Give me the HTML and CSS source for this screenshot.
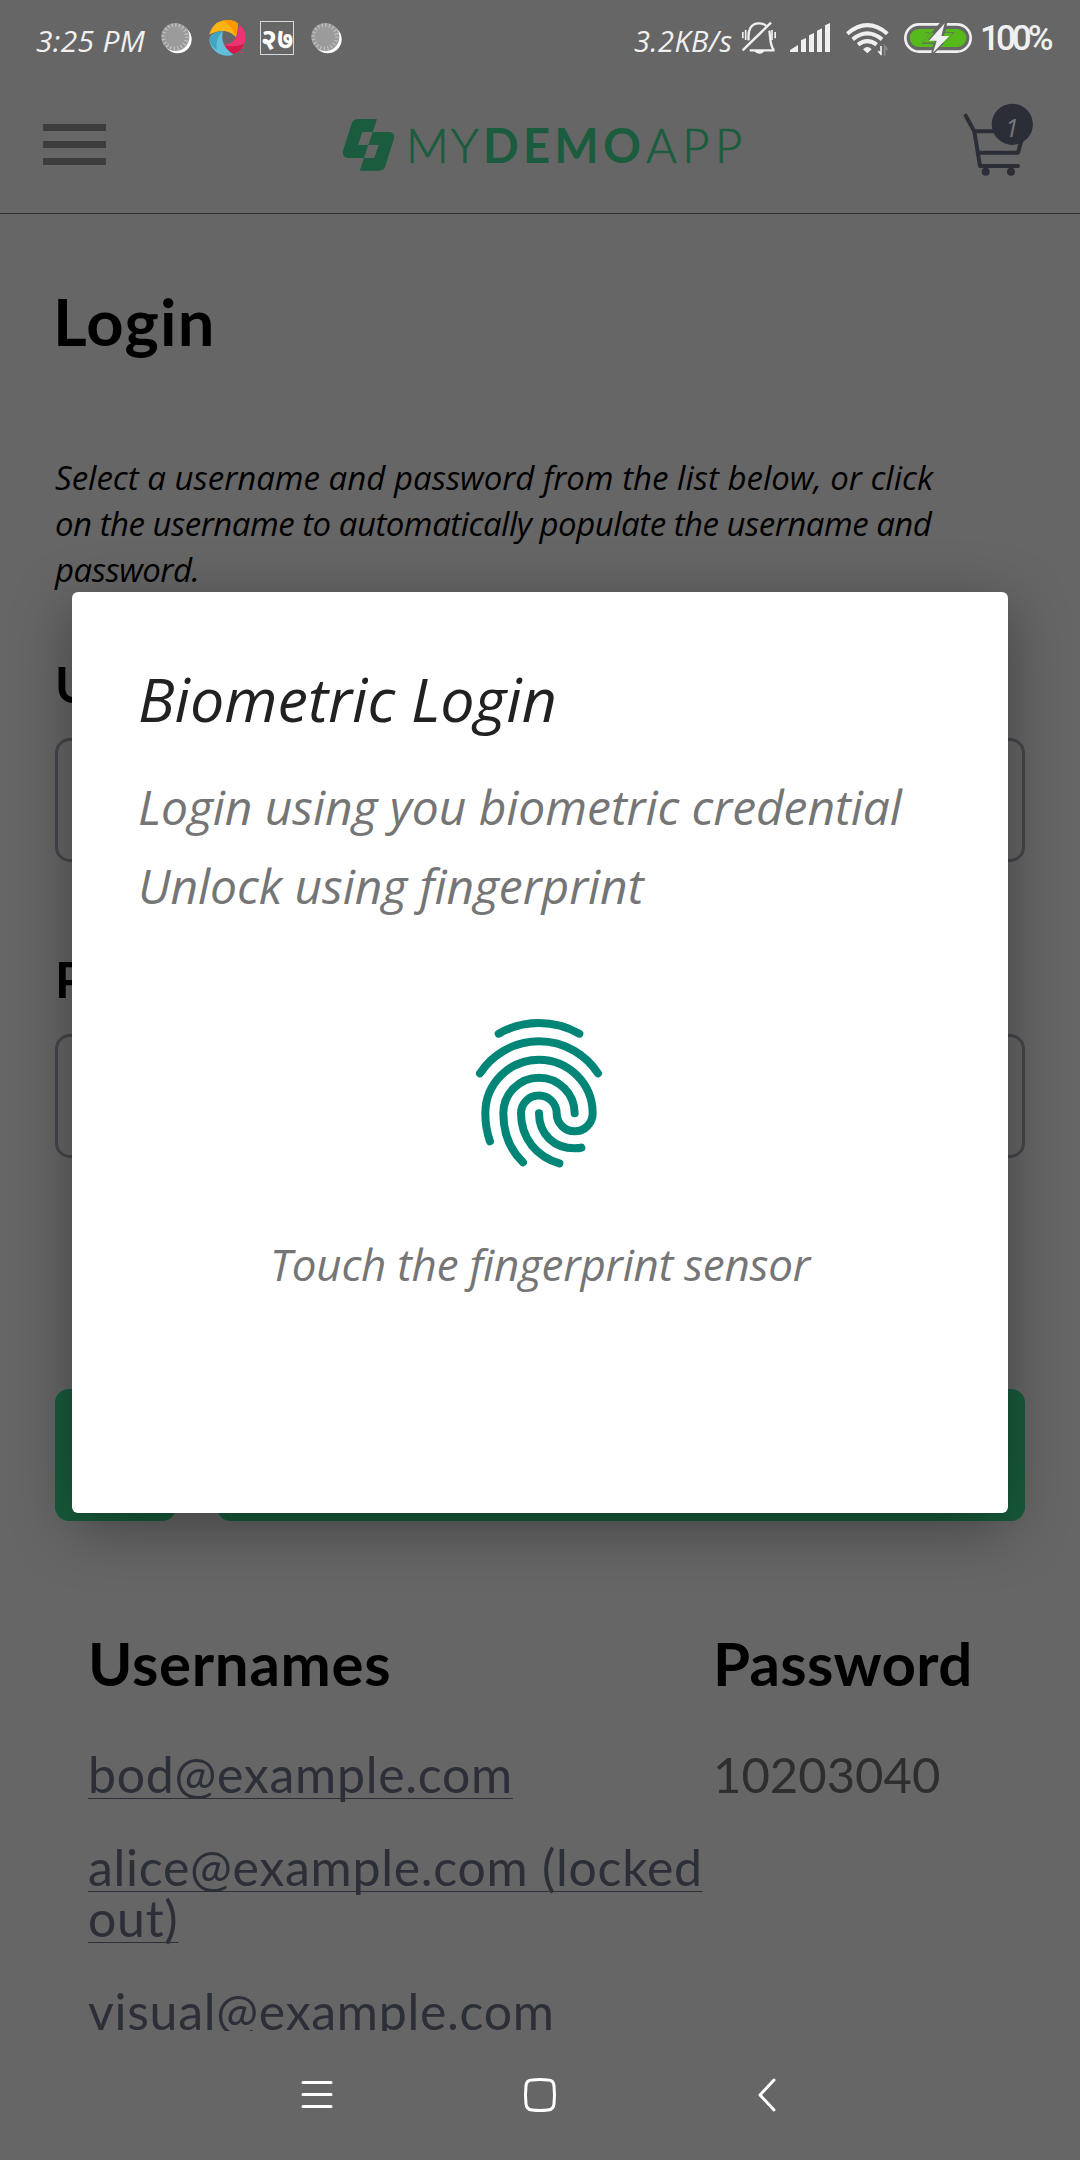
FILE: index.html
```
<!DOCTYPE html>
<html lang="en">
<head>
<meta charset="utf-8">
<title>My Demo App - Login</title>
<link rel="stylesheet" href="styles.css">
</head>
<body>
<div class="screen">
  <div class="status">
    <span class="clock">3:25 PM</span>
    <svg class="ic-dial" width="32" height="36" viewBox="484 60 96 108">
      <circle cx="534" cy="118" r="42" fill="#fff"/>
      <circle cx="527" cy="111" r="42" fill="#9b9b9b"/>
      <circle cx="526" cy="110" r="35" fill="none" stroke="#c9c9c9" stroke-width="11" stroke-dasharray="3 8"/>
    </svg>
    <svg class="ic-swirl" width="37" height="36" viewBox="626 60 111 108">
      <path d="M627 104C634 74 656 60 681 60C694 60 705 64 712 70C713 88 710 101 706 112C692 90 658 86 627 104Z" fill="#fdb515"/>
      <path d="M668 62C690 57 706 63 711 70C713 88 710 101 706 112C702 94 690 76 668 62Z" fill="#ff9800"/>
      <path d="M716 73C733 86 740 108 733 128C725 151 710 161 699 160C686 156 676 144 671 134C698 135 715 111 716 73Z" fill="#ef3370"/>
      <path d="M671 134C687 141 712 140 731 131C724 150 710 160 699 160C686 156 676 144 671 134Z" fill="#d3184b"/>
      <path d="M668 94C661 122 671 145 699 164C670 175 636 158 628 126C625 113 635 99 668 94Z" fill="#62bfdc"/>
      <path d="M668 94C653 108 648 120 649 149C632 138 626 123 628 111C638 99 652 94 668 94Z" fill="#42a5bf"/>
      <path d="M720 157h9" stroke="#ef3370" stroke-width="3"/>
    </svg>
    <span class="ic-date"><span>२७</span></span>
    <svg class="ic-dial2" width="32" height="36" viewBox="484 60 96 108">
      <circle cx="534" cy="118" r="42" fill="#fff"/>
      <circle cx="527" cy="111" r="42" fill="#9b9b9b"/>
      <circle cx="526" cy="110" r="35" fill="none" stroke="#c9c9c9" stroke-width="11" stroke-dasharray="3 8"/>
    </svg>
    <span class="speed">3.2KB/s</span>
    <svg class="ic-bell" width="34" height="36" viewBox="426 60 102 108" fill="none" stroke="#f0f0f0" stroke-width="7">
      <path d="M428 151L513 68"/>
      <path d="M446 121C443 90 452 70 477 70C487 70 494 73 499 78"/>
      <path d="M508 92C512 118 510 135 520 148V151H449"/>
      <path d="M462 153Q478 170 494 153Z" fill="#f0f0f0" stroke="none"/>
      <path d="M437 90V120M516 90V120" stroke-width="5"/>
      <path d="M428.500 96V115M525.500 96V115" stroke-width="5"/>
    </svg>
    <svg class="ic-signal" width="40" height="36" viewBox="570 60 120 108" fill="#f0f0f0">
      <path d="M570 156V150L594 135V156ZM603 156V121L618 114V156ZM627 156V106L642 99V156ZM651 156V92L666 85V156ZM675 156V76L690 69V156Z"/>
    </svg>
    <svg class="ic-wifi" width="43" height="36" viewBox="737 60 129 108" fill="none" stroke="#f0f0f0" stroke-width="12">
      <path d="M741 101Q801 50 861 101M757 118Q801 82 845 118M773 134Q801 113 829 134"/>
      <path d="M801 160L788 148Q801 134 814 148Z" fill="#f0f0f0" stroke="none"/>
      <path d="M842 138V166M834 153L842 163" stroke-width="5"/>
      <path d="M853 167V138L862 150" stroke="#8b8b8b" stroke-width="5"/>
    </svg>
    <svg class="ic-battery" width="68" height="36" viewBox="912 60 204 108">
      <rect x="916" y="73" width="196" height="82" rx="41" fill="none" stroke="#f0f0f0" stroke-width="8"/>
      <rect x="929" y="87" width="170" height="54" rx="27" fill="#56b91c"/>
      <path d="M1032 66L1042 66L1036 97H1064L1004 160H994L1000 131H966L1022 66Z" fill="#666"/>
      <path d="M1003 98H975Q984 98 990 99L967 128L1003 128L1006 120L985 119Z" fill="#56b91c" stroke="#666" stroke-width="1"/>
      <path d="M1034 99H1060L1034 128H1026Z" fill="#56b91c"/>
      <path d="M1034 70L987 122H1010L999 158L1048 108H1024Z" fill="#f0f0f0"/>
    </svg>
    <span class="percent">100%</span>
  </div>

  <header class="header">
    <svg class="burger" width="63" height="42" viewBox="0 0 63 42" fill="#3d3d3d">
      <rect y="0" width="63" height="7"/><rect y="17" width="63" height="7"/><rect y="34" width="63" height="7"/>
    </svg>
    <div class="brand">
      <svg width="52" height="52" viewBox="0 0 52 52" fill="#1a5c3d">
        <path d="M15 0H34L29.7 13H19.3L15 26H25.3L21 39H6Q-1 39 0 32L8.5 5Q10 0 15 0Z"/>
        <path d="M29.7 13H45Q52.500 13 50.800 20L42.500 46.500Q41 51.700 36 51.700H16.700L21 39H31.300L35.700 26H25.300Z"/>
      </svg>
      <span class="brand-my">MY</span><span class="brand-demo">DEMO</span><span class="brand-app">APP</span>
    </div>
    <svg class="cart" width="72" height="85" viewBox="0 0 72 85">
      <g fill="none" stroke="#2b2e37" stroke-width="4" stroke-linecap="round" stroke-linejoin="round">
        <path d="M3.700 13.700L12.300 29.300L18 64H56"/>
        <path d="M12.300 29.300H62L56 50.700H16"/>
      </g>
      <circle cx="23.700" cy="69.700" r="4" fill="#2b2e37"/><circle cx="49" cy="69.700" r="4" fill="#2b2e37"/>
      <circle cx="50.300" cy="22.300" r="20.600" fill="#2b2e37"/>
      <text x="50" y="34.500" text-anchor="middle" class="cart-count">1</text>
    </svg>
  </header>

  <main class="page">
    <h1>Login</h1>
    <p class="intro">Select a username and password from the list below, or click<br><span class="intro-tight">on the username to automatically populate the username and<br>password.</span></p>
    <div class="label">Username</div>
    <div class="field"></div>
    <div class="label label-second">Password</div>
    <div class="field"></div>
    <div class="buttons"><div class="btn-finger"></div><div class="btn-login"></div></div>
    <div class="accounts">
      <section>
        <h2>Usernames</h2>
        <a>bod@example.com</a>
        <a>alice@example.com (locked<br>out)</a>
        <a>visual@example.com</a>
      </section>
      <section>
        <h2 class="pw-title">Password</h2>
        <span class="pw">10203040</span>
      </section>
    </div>
  </main>

  <nav class="nav">
    <svg width="32" height="36" viewBox="0 0 32 36" stroke="#fff" stroke-width="3" stroke-linecap="round"><path d="M2 5.500H30M2 17.500H30M2 29.500H30"/></svg>
    <svg width="34" height="36" viewBox="0 0 34 36" fill="none" stroke="#fff" stroke-width="3"><path d="M9 3Q17 2 25 3Q30.500 3 31 9Q32 18 31 27Q30.500 32.500 25 33Q17 34 9 33Q3.500 32.500 3 27Q2 18 3 9Q3.500 3 9 3Z"/></svg>
    <svg width="22" height="36" viewBox="0 0 22 36" fill="none" stroke="#fff" stroke-width="3" stroke-linecap="round" stroke-linejoin="round"><path d="M18 3L4 18L18 33"/></svg>
  </nav>

  <div class="dialog">
    <div class="dialog-title">Biometric Login</div>
    <div class="dialog-text">Login using you biometric credential</div>
    <div class="dialog-text">Unlock using fingerprint</div>
    <svg class="finger" width="128" height="150" viewBox="105 114 384 450" fill="none" stroke="#008577" stroke-width="24" stroke-linecap="round">
      <path d="M176 161A244 244 0 0 1 418 161"/>
      <path d="M120 280A211 211 0 0 1 474 280"/>
      <path d="M150 484Q136 445 136 400A161 161 0 0 1 458 400A54 54 0 0 1 350 400A53.500 53.500 0 0 0 243 400C243 475 290 530 358 550"/>
      <path d="M249 547C210 510 190 460 190 400A107 107 0 0 1 404 400"/>
      <path d="M297 400C297 465 345 505 404 505Q418 505 424 503"/>
    </svg>
    <div class="dialog-hint">Touch the fingerprint sensor</div>
  </div>
</div>
</body>
</html>
```
FILE: styles.css
```
* { box-sizing: border-box; }
body { margin: 0; background: #666; }
.screen { position: relative; width: 1080px; height: 2160px; display: flex; flex-direction: column; overflow: hidden; background: #666; font-family: "Lato", sans-serif; }
svg { display: block; flex: none; }

.status { display: flex; align-items: flex-start; height: 76px; padding: 20px 0 0 36px; color: #f0f0f0; white-space: nowrap; }
.clock, .speed { font: italic 400 30px/42px "Open Sans", sans-serif; }
.clock { width: 125px; letter-spacing: .3px; }
.ic-swirl { margin-left: 16px; }
.ic-date { display: flex; justify-content: center; width: 34px; height: 34px; margin: 1px 0 0 14px; border: 1px solid #d8d8d8; font: 700 29px/32px "Noto Sans", sans-serif; color: #fff; }
.ic-dial2 { margin-left: 17px; }
.speed { width: 108px; margin-left: 291px; font-size: 29px; line-height: 41px; letter-spacing: .4px; }
.ic-signal { margin-left: 14px; }
.ic-wifi { margin-left: 16px; }
.ic-battery { margin-left: 15px; }
.percent { margin-left: 8px; font: 500 35px/37px "Roboto", sans-serif; letter-spacing: -4px; }

.header { display: flex; align-items: center; height: 138px; padding: 0 46px 0 43px; border-bottom: 1px solid #2d2d2d; }
.brand { display: flex; align-items: center; margin-left: 237px; font-size: 47px; line-height: 56px; color: #1a5c3d; }
.brand-my { width: 77px; margin-left: 11px; font-weight: 300; letter-spacing: 2px; -webkit-text-stroke: .7px #1a5c3d; }
.brand-demo { width: 163px; font-weight: 700; letter-spacing: 4.300px; }
.brand-app { font-weight: 300; letter-spacing: 5.500px; -webkit-text-stroke: .7px #1a5c3d; }
.cart { margin-left: auto; }
.cart-count { font: italic 400 25px "Open Sans", sans-serif; fill: #777; }

.page { height: 1817px; padding: 68px 55px 0; overflow: hidden; }
h1, h2, p { margin: 0; }
h1 { margin-left: -2px; font-size: 65px; line-height: 78px; letter-spacing: 1.200px; color: #000; }
.intro { margin-top: 95px; font: italic 400 33px/46px "Open Sans", sans-serif; color: #000; white-space: nowrap; }
.intro-tight { letter-spacing: -.500px; }
.label { margin-top: 61px; font-size: 50px; line-height: 60px; font-weight: 700; color: #000; }
.label-second { margin-top: 87px; }
.field { height: 124px; margin-top: 24px; border: 3px solid #45474e; border-radius: 15px; }
.label-second + .field { margin-top: 25px; }
.buttons { display: flex; gap: 41px; height: 132px; margin-top: 231px; }
.btn-finger, .btn-login { border-radius: 14px; background: #185c3b; }
.btn-finger { width: 121px; }
.btn-login { flex: 1; }
.accounts { display: grid; grid-template-columns: 625px 1fr; padding: 106px 0 0 33px; white-space: nowrap; }
.accounts section { display: flex; flex-direction: column; align-items: flex-start; }
h2 { margin-bottom: 8px; font-size: 60px; line-height: 72px; color: #000; letter-spacing: .7px; }
.pw-title { letter-spacing: .3px; }
.accounts a { margin-top: 42px; font-size: 50px; line-height: 51px; letter-spacing: .720px; color: #2c2f38; text-decoration: underline 1px; text-decoration-skip-ink: none; text-underline-offset: 5px; }
.pw { margin-top: 42px; font-size: 49px; line-height: 51px; color: #2e2e2e; }

.nav { display: flex; align-items: flex-start; padding: 46px 0 0 301px; }
.nav svg:nth-child(2) { margin-left: 190px; }
.nav svg:nth-child(3) { margin-left: 199px; }

.dialog { position: absolute; left: 72px; top: 592px; width: 936px; height: 921px; padding: 67px 66px 0; border-radius: 6px; background: #fff; box-shadow: 0 14px 60px rgba(0, 0, 0, .36); font: italic 400 48px/78.500px "Open Sans", sans-serif; letter-spacing: -.080px; color: #757575; white-space: nowrap; }
.dialog-title { margin-bottom: 29px; font-size: 61px; line-height: 80px; letter-spacing: 0; color: #212121; }
.finger { margin: 93px 0 0 337px; }
.dialog-hint { margin-top: 66px; font-size: 44px; line-height: 60px; letter-spacing: -.250px; text-align: center; }
```
